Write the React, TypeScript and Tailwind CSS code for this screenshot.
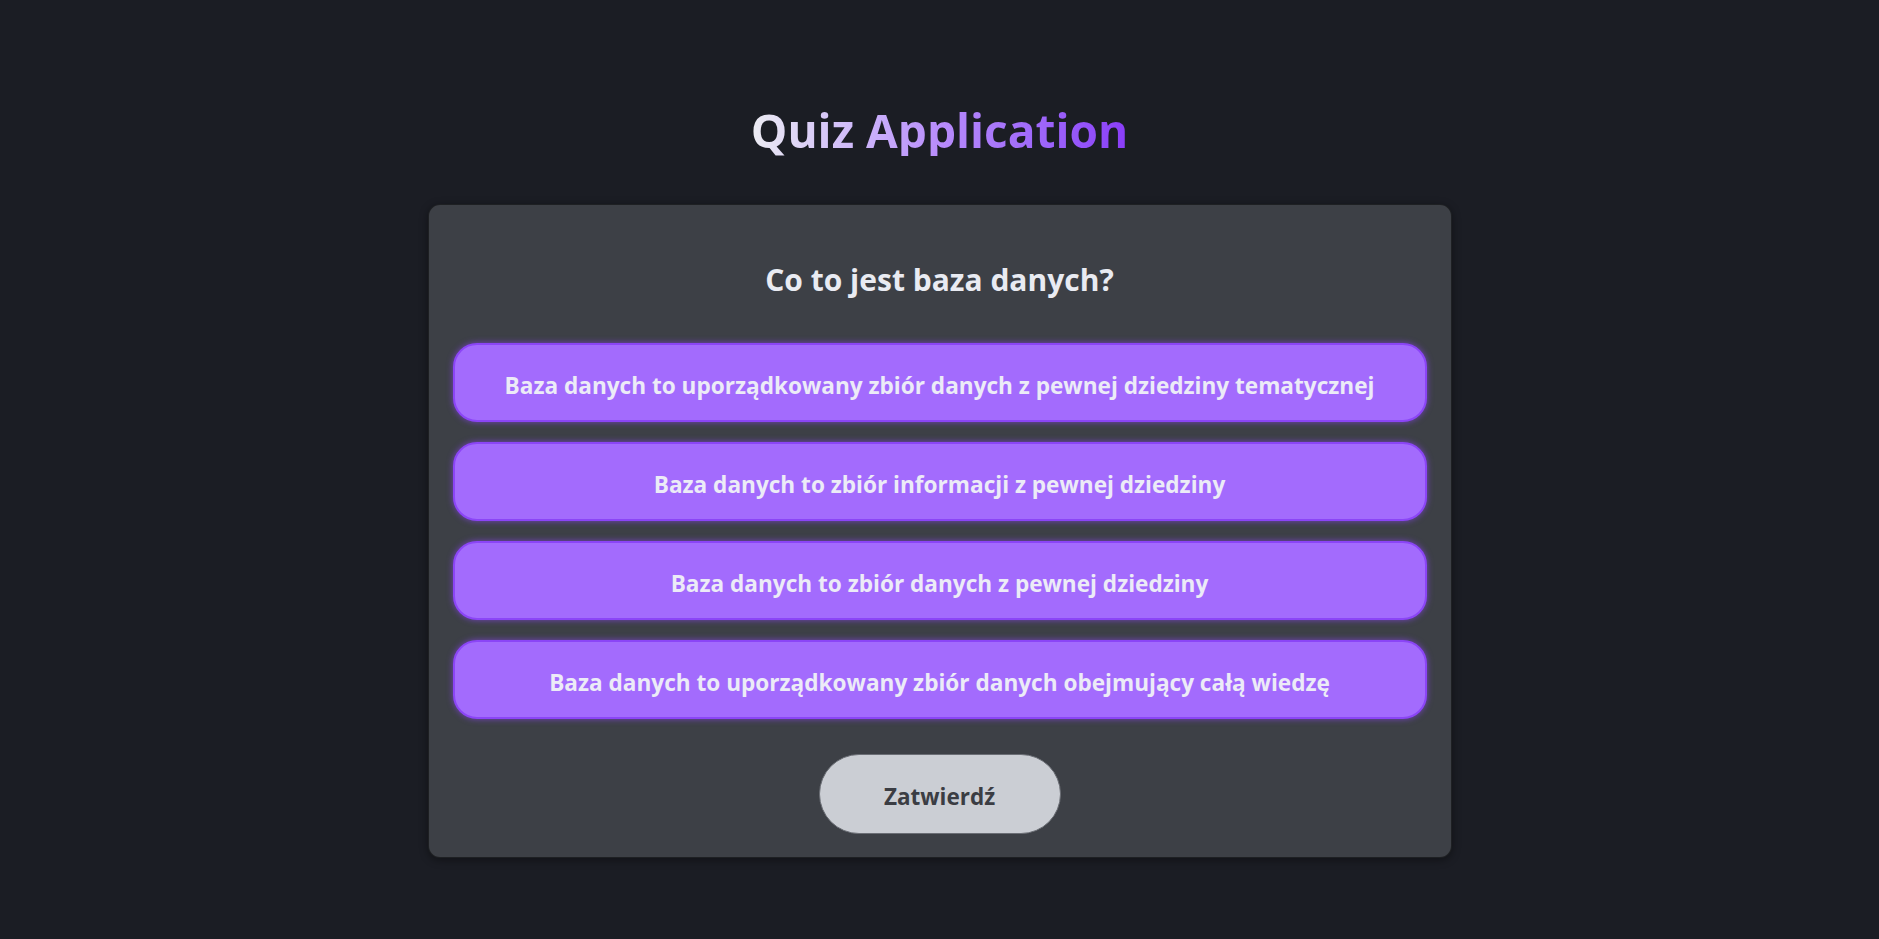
import React, { useState } from "react"

const answers = [
  "Baza danych to uporządkowany zbiór danych z pewnej dziedziny tematycznej",
  "Baza danych to zbiór informacji z pewnej dziedziny",
  "Baza danych to zbiór danych z pewnej dziedziny",
  "Baza danych to uporządkowany zbiór danych obejmujący całą wiedzę",
]

export default function App() {
  const [picked, setPicked] = useState<number | null>(null)

  return (
    <div className="min-h-screen w-full bg-[#1b1d24] font-['Open_Sans','Noto_Sans',sans-serif] flex flex-col items-center pt-[104px]">
      <h1 className="text-[46px] leading-[52px] font-bold bg-gradient-to-r from-[#ececf2] via-[#b88cfb] to-[#8a3cf8] bg-clip-text text-transparent">
        Quiz Application
      </h1>

      <div className="mt-[48px] w-[1024px] rounded-xl bg-[#3d4046] border border-black/50 shadow-[0_2px_8px_rgba(0,0,0,0.4)] px-6 pt-[57px] pb-[23px] flex flex-col items-center">
        <h2 className="text-[30px] leading-[36px] font-bold text-[#e9ebf2]">
          Co to jest baza danych?
        </h2>

        <div className="mt-[45px] w-full flex flex-col gap-[20px]">
          {answers.map((a, i) => (
            <button
              key={i}
              type="button"
              onClick={() => setPicked(i)}
              className={[
                "h-[79px] w-full rounded-3xl border-2 border-[#8b45f6] bg-[#a36bfd] shadow-[0_0_6px_rgba(139,69,246,0.7)] pt-[6px]",
                "flex items-center justify-center text-[22.6px] font-bold text-[#ecebf7]",
                picked === i ? "ring-2 ring-white/60" : "",
              ].join(" ")}
            >
              {a}
            </button>
          ))}
        </div>

        <button
          type="button"
          className="mt-[35px] h-[80px] w-[242px] rounded-full border border-[#6b6e75] bg-[#cbced4] pt-[6px] text-[22.5px] font-bold text-[#3b3d43]"
        >
          Zatwierdź
        </button>
      </div>
    </div>
  )
}
